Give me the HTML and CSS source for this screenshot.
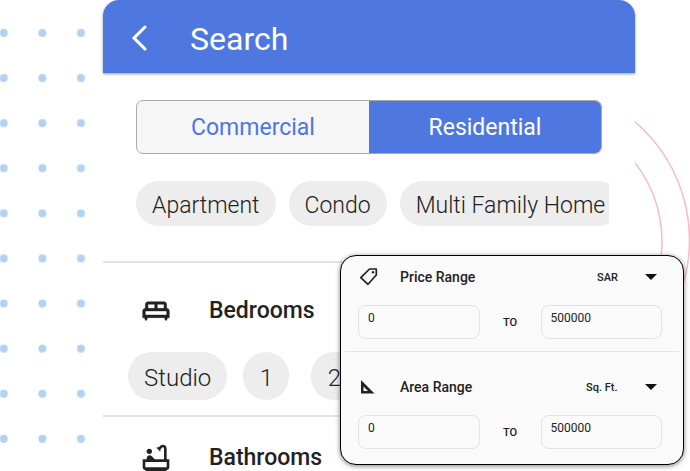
FILE: index.html
```html
<!DOCTYPE html>
<html lang="en">
<head>
<meta charset="utf-8">
<meta name="viewport" content="width=device-width, initial-scale=1">
<title>Search</title>
<link rel="stylesheet" href="styles.css">
</head>
<body>
<div class="stage">
  <svg class="dots" aria-hidden="true">
    <defs>
      <pattern id="dot" x="-15.5" y="10.5" width="38.6" height="45.1" patternUnits="userSpaceOnUse">
        <circle cx="19.3" cy="22.5" r="4" fill="#b3d2f1"/>
      </pattern>
    </defs>
    <rect width="100" height="450" fill="url(#dot)"/>
  </svg>
  <svg class="arcs" viewBox="0 0 320 320" aria-hidden="true">
    <circle cx="160" cy="160" r="155.500" fill="none" stroke="#f5bcc9" stroke-width="1.5"/>
    <circle cx="161" cy="161" r="127" fill="none" stroke="#f5bcc9" stroke-width="1.5"/>
  </svg>

  <main class="phone">
    <header class="bar">
      <button class="back" type="button" aria-label="Back">
        <svg width="16" height="26" viewBox="0 0 16 26"><path d="M14 2 3 13l11 11" fill="none" stroke="#fff" stroke-width="3" stroke-linecap="round"/></svg>
      </button>
      <h1 class="title">Search</h1>
    </header>

    <section class="types">
      <div class="segment">
        <button class="tab" type="button">Commercial</button>
        <button class="tab tab-active" type="button">Residential</button>
      </div>
      <div class="chips">
        <button class="chip" type="button">Apartment</button>
        <button class="chip" type="button">Condo</button>
        <button class="chip" type="button">Multi Family Home</button>
      </div>
    </section>

    <section class="rooms">
      <h2 class="heading">
        <svg width="32" height="32" viewBox="0 0 24 24" aria-hidden="true"><path fill="#222" stroke="#222" stroke-width=".3" d="M22 12c0-1.1-.9-2-2-2V7c0-1.1-.9-2-2-2H6c-1.1 0-2 .9-2 2v3c-1.1 0-2 .9-2 2v5h1.330L4 19h1l.67-2h12.670l.66 2h1l.67-2H22v-5zm-4-2h-5V7h5v3zM6 7h5v3H6V7zm-2 5h16v3H4v-3z"/></svg>
        Bedrooms
      </h2>
      <div class="counts">
        <button class="chip chip-tall" type="button">Studio</button>
        <div class="numbers">
          <button class="chip chip-tall chip-round" type="button">1</button>
          <button class="chip chip-tall chip-round" type="button">2</button>
        </div>
      </div>
    </section>

    <section class="rooms rooms-last">
      <h2 class="heading">
        <svg width="32" height="32" viewBox="0 0 24 24" aria-hidden="true"><circle cx="7" cy="7" r="2" fill="#222"/><path fill="#222" d="M20 13V4.830C20 3.270 18.730 2 17.170 2c-.75 0-1.470.3-2 .83l-1.250 1.250c-.16-.05-.33-.08-.51-.08-.4 0-.77.12-1.080.32l2.760 2.760c.2-.31.32-.68.32-1.080 0-.18-.03-.34-.07-.51l1.250-1.250c.15-.15.36-.24.58-.24.46 0 .83.37.83.83V13h-6.850c-.3-.21-.57-.45-.82-.72l-1.400-1.550c-.19-.21-.43-.38-.69-.5-.31-.15-.65-.23-1-.23C6 10.010 5 11.010 5 12.250V13H2v6c0 1.100.9 2 2 2 0 .55.45 1 1 1h14c.55 0 1-.45 1-1 1.100 0 2-.9 2-2v-6h-2zm0 6H4v-4h16v4z"/></svg>
        Bathrooms
      </h2>
    </section>
  </main>

  <aside class="ranges">
    <section class="range">
      <div class="range-head">
        <svg width="20" height="20" viewBox="0 0 20 20" aria-hidden="true"><path d="M11.500 2h6.800v6L10 17.300 2.800 10.600z" fill="none" stroke="#222" stroke-width="1.7" stroke-linejoin="round"/><circle cx="15" cy="5.2" r="1.2" fill="#222"/></svg>
        <h3 class="range-title">Price Range</h3>
        <div class="unit">
          <select class="unit-select" aria-label="Currency"><option>SAR</option></select>
          <svg class="caret" width="12" height="6" viewBox="0 0 12 6" aria-hidden="true"><path d="M0 0h12L6 6z" fill="#111"/></svg>
        </div>
      </div>
      <div class="fields">
        <input class="field" type="text" value="0" aria-label="Lowest price">
        <span class="to">TO</span>
        <input class="field" type="text" value="500000" aria-label="Highest price">
      </div>
    </section>
    <section class="range">
      <div class="range-head">
        <svg width="20" height="20" viewBox="0 0 20 20" aria-hidden="true"><path d="M3 3l13.500 13.500H3zM5.500 9.500v4.500H10z" fill="#222" fill-rule="evenodd"/></svg>
        <h3 class="range-title">Area Range</h3>
        <div class="unit">
          <select class="unit-select" aria-label="Area unit"><option>Sq. Ft.</option></select>
          <svg class="caret" width="12" height="6" viewBox="0 0 12 6" aria-hidden="true"><path d="M0 0h12L6 6z" fill="#111"/></svg>
        </div>
      </div>
      <div class="fields">
        <input class="field" type="text" value="0" aria-label="Smallest area">
        <span class="to">TO</span>
        <input class="field" type="text" value="500000" aria-label="Largest area">
      </div>
    </section>
  </aside>
</div>
</body>
</html>
```
FILE: styles.css
```css
* {
  box-sizing: border-box;
}

body {
  margin: 0;
  background: #fff;
  color: #222;
  font-family: Roboto, "Liberation Sans", sans-serif;
}

button,
input,
select {
  margin: 0;
  border: 0;
  background: none;
  color: inherit;
  font: inherit;
}

h1,
h2,
h3 {
  margin: 0;
}

svg {
  display: block;
  flex: none;
}

.stage {
  position: relative;
  height: 100vh;
  overflow: hidden;
  padding: 0 55px 0 103px;
}

.dots {
  position: absolute;
  left: 0;
  top: 0;
  width: 100px;
  height: 100%;
}

.arcs {
  position: absolute;
  right: -4px;
  top: 80px;
  width: 320px;
  height: 320px;
}

.phone {
  position: relative;
  min-height: 100%;
  background: #fff;
  border-radius: 16px 16px 0 0;
}

.bar {
  display: flex;
  align-items: center;
  gap: 43px;
  height: 73px;
  padding: 3px 28px 0;
  background: #4f77e0;
  border-radius: 16px 16px 0 0;
  box-shadow: 0 1px 3px rgba(0, 0, 0, 0.4);
  color: #fff;
}

.back {
  padding: 0;
}

.title {
  padding-top: 2px;
  font-size: 32px;
  line-height: 40px;
  font-weight: 400;
}

.types {
  padding: 27px 26px 35px 33px;
}

.segment {
  display: flex;
  height: 54px;
  margin-right: 7px;
  border: 1px solid #aaa;
  border-radius: 7px;
  overflow: hidden;
  background: #f6f6f6;
}

.tab {
  flex: 1;
  padding-top: 2px;
  color: #4a76ea;
  font-size: 23px;
}

.tab-active {
  background: #4f77e0;
  color: #fff;
}

.chips {
  display: flex;
  gap: 13px;
  margin-top: 27px;
  overflow: hidden;
}

.chip {
  flex: none;
  height: 45px;
  padding: 4px 16px 0;
  border-radius: 24px;
  background: #ededed;
  font-size: 23px;
  font-weight: 300;
  white-space: nowrap;
}

.chip-tall {
  height: 48px;
  font-size: 24px;
}

.chip-round {
  width: 46px;
}

.rooms {
  padding: 32px 25px 15px;
  border-top: 2px solid #e3e3e3;
}

.rooms-last {
  padding: 25px 25px 0;
}

.heading {
  display: flex;
  align-items: center;
  gap: 37px;
  padding-left: 12px;
  font-size: 23px;
  line-height: 32px;
  font-weight: 500;
}

.counts {
  display: flex;
  gap: 16px;
  margin-top: 25px;
}

.numbers {
  display: flex;
  gap: 22px;
}

.ranges {
  position: absolute;
  right: 6px;
  bottom: 6px;
  width: 344px;
  background: #fafafa;
  border: 1px solid #000;
  border-radius: 16px;
  box-shadow: 0 1px 5px rgba(0, 0, 0, 0.5);
}

.range {
  margin: 0 4px;
  padding: 25px 17px 15px 13px;
}

.range:first-child {
  padding: 11px 17px 12px 13px;
  border-bottom: 1px solid #e6e6e6;
}

.range-head {
  display: flex;
  align-items: center;
  gap: 22px;
}

.range-title {
  flex: 1;
  font-size: 14px;
  line-height: 20px;
  font-weight: 500;
}

.unit {
  display: grid;
  align-items: center;
}

.unit-select,
.caret {
  grid-area: 1 / 1;
}

.unit-select {
  appearance: none;
  height: 20px;
  padding: 0 44px 0 0;
  font-size: 11px;
  font-weight: 500;
}

.caret {
  justify-self: end;
  margin-right: 5px;
  pointer-events: none;
}

.fields {
  display: flex;
  align-items: center;
  margin-top: 18px;
}

.field {
  flex: 1;
  min-width: 0;
  height: 34px;
  padding: 0 9px 9px;
  border: 1px solid #e3e3e3;
  border-radius: 8px;
  font-size: 12px;
}

.to {
  width: 61px;
  font-size: 11px;
  font-weight: 500;
  text-align: center;
}
```
